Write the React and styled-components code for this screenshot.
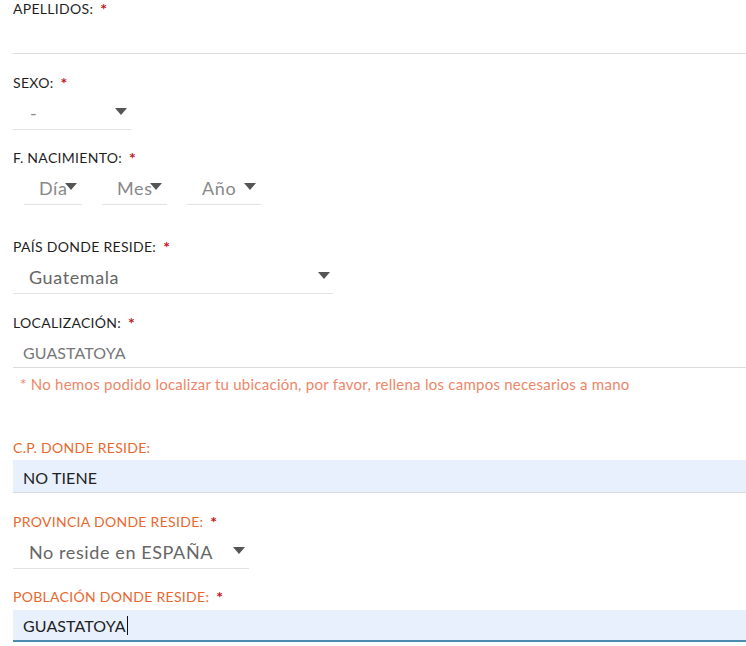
import React from "react";
import styled, { createGlobalStyle } from "styled-components";

const GlobalStyle = createGlobalStyle`
  html, body { margin: 0; padding: 0; background: #fff; }
  body { font-family: "Lato", "Open Sans", sans-serif; }
  * { box-sizing: border-box; }
`;

const Form = styled.form`
  display: flex;
  flex-direction: column;
  padding-left: 13px;
  width: 100%;
  overflow: hidden;
`;

const Field = styled.div`
  display: flex;
  flex-direction: column;
  margin-bottom: ${(p) => p.$after}px;
`;

const Label = styled.label`
  display: flex;
  align-items: flex-start;
  height: 18px;
  font-size: 14px;
  line-height: 18px;
  text-transform: uppercase;
  letter-spacing: 0.3px;
  color: ${(p) => (p.$accent ? "#e8682e" : "#1f1f1f")};
`;

const Req = styled.span`
  color: #c4161c;
  font-weight: 700;
  font-size: 16px;
  line-height: 17px;
  margin-left: 7px;
`;

const TextInput = styled.input`
  display: block;
  width: 100%;
  height: 33px;
  margin-top: 3px;
  padding: 2px 10px 0;
  border: none;
  border-bottom: 1px solid ${(p) => (p.$filled ? "#d6d9de" : "#dcdcdc")};
  background: ${(p) => (p.$filled ? "#e8f0fe" : "transparent")};
  font-family: inherit;
  font-size: 16px;
  letter-spacing: 0.1px;
  color: ${(p) => (p.$filled ? "#222" : "#777")};
  outline: none;
`;

const FocusedBox = styled.div`
  display: flex;
  align-items: center;
  width: 100%;
  height: 32px;
  margin-top: 4px;
  padding: 0 10px;
  background: #e8f0fe;
  border-bottom: 2px solid #4a8db0;
  font-size: 16px;
  letter-spacing: 0.1px;
  color: #222;
`;

const Caret = styled.span`
  display: inline-block;
  width: 1px;
  height: 19px;
  background: #111;
  margin-left: 1px;
`;

const SelectWrap = styled.div`
  position: relative;
  width: ${(p) => p.$w}px;
  height: 38px;
  border-bottom: 1px solid #e2e2e2;
`;

const NativeSelect = styled.select`
  appearance: none;
  -webkit-appearance: none;
  width: 100%;
  height: 37px;
  padding: 7px 0 2px ${(p) => p.$pl || 16}px;
  border: none;
  background: transparent;
  font-family: inherit;
  font-size: 18px;
  letter-spacing: 0.6px;
  color: ${(p) => p.$color || "#666"};
  outline: none;
`;

const Arrow = styled.svg`
  position: absolute;
  right: ${(p) => p.$r || 4}px;
  top: 16px;
  pointer-events: none;
`;

const DateRow = styled.div`
  display: flex;
  gap: 20px;
  margin-left: 11px;
`;

const ErrorText = styled.p`
  margin: 8px 0 0 7px;
  font-size: 15px;
  line-height: 16px;
  letter-spacing: 0.25px;
  color: #ee8668;
`;

const Tri = ({ r }) => (
  <Arrow $r={r} width="12" height="7" viewBox="0 0 12 7">
    <path d="M0 0 H12 L6 7 Z" fill="#555" />
  </Arrow>
);

const Select = ({ w, value, color, pl, r }) => (
  <SelectWrap $w={w}>
    <NativeSelect $color={color} $pl={pl} defaultValue={value}>
      <option>{value}</option>
    </NativeSelect>
    <Tri r={r} />
  </SelectWrap>
);

const FieldLabel = ({ children, req, accent }) => (
  <Label $accent={accent}>
    {children}
    {req && <Req>*</Req>}
  </Label>
);

export default function App() {
  return (
    <>
      <GlobalStyle />
      <Form>
        <Field $after={20}>
          <FieldLabel req>Apellidos:</FieldLabel>
          <TextInput readOnly value="" />
        </Field>

        <Field $after={19}>
          <FieldLabel req>Sexo:</FieldLabel>
          <Select w={118} value="-" color="#888" pl={17} />
        </Field>

        <Field $after={33}>
          <FieldLabel req>F. Nacimiento:</FieldLabel>
          <DateRow>
            <Select w={58} value="Día" color="#888" pl={15} r={5} />
            <Select w={65} value="Mes" color="#888" pl={15} r={5} />
            <Select w={74} value="Año" color="#888" pl={15} r={5} />
          </DateRow>
        </Field>

        <Field $after={20}>
          <FieldLabel req>País donde reside:</FieldLabel>
          <Select w={320} value="Guatemala" r={3} />
        </Field>

        <Field $after={47}>
          <FieldLabel req>Localización:</FieldLabel>
          <TextInput readOnly value="GUASTATOYA" />
          <ErrorText>
            * No hemos podido localizar tu ubicación, por favor, rellena los campos necesarios a mano
          </ErrorText>
        </Field>

        <Field $after={20}>
          <FieldLabel accent>C.P. donde reside:</FieldLabel>
          <TextInput readOnly $filled value="NO TIENE" />
        </Field>

        <Field $after={19}>
          <FieldLabel accent req>Provincia donde reside:</FieldLabel>
          <Select w={236} value="No reside en ESPAÑA" />
        </Field>

        <Field $after={0}>
          <FieldLabel accent req>Población donde reside:</FieldLabel>
          <FocusedBox>
            GUASTATOYA
            <Caret />
          </FocusedBox>
        </Field>
      </Form>
    </>
  );
}
